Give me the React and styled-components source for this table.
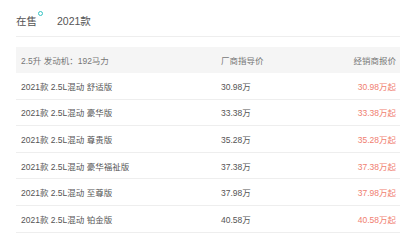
import React from "react";
import styled, { createGlobalStyle } from "styled-components";

const Global = createGlobalStyle`
  html, body { margin: 0; padding: 0; background: #fff; }
  body { font-family: "Liberation Sans", "Noto Sans CJK SC", sans-serif; overflow: hidden; }
`;

const Page = styled.div`
  width: 400px;
  height: 241px;
  padding: 0 0 0 16px;
  box-sizing: border-box;
  overflow: hidden;
`;

const Tabs = styled.div`
  display: flex;
  align-items: center;
  gap: 20px;
  height: 37px;
  padding-top: 4px;
  box-sizing: border-box;
  border-bottom: 1px solid #eeeeee;
  margin-right: -10px;
`;

const Tab = styled.div`
  position: relative;
  font-size: 10.5px;
  color: #555;
`;

const Dot = styled.span`
  position: absolute;
  right: -6px;
  top: -2px;
  width: 3px;
  height: 3px;
  border: 1px solid #35c3c3;
  border-radius: 50%;
`;

const Table = styled.div`
  margin-top: 10px;
  margin-right: -10px;
  font-size: 8.5px;
`;

const Row = styled.div`
  display: grid;
  grid-template-columns: 200px 1fr 120px;
  align-items: center;
  height: ${(p) => (p.$head ? "26px" : "26.6px")};
  padding: 0 14px 0 5px;
  box-sizing: border-box;
  background: ${(p) => (p.$head ? "#f5f5f5" : "#fff")};
  border-bottom: ${(p) => (p.$head ? "none" : "1px solid #eeeeee")};
  color: ${(p) => (p.$head ? "#777" : "#555")};
`;

const Cell = styled.div`
  white-space: nowrap;
  text-align: ${(p) => (p.$right ? "right" : "left")};
  color: ${(p) => (p.$red ? "#f07e70" : "inherit")};
`;

const rows = [
  ["2021款 2.5L混动 舒适版", "30.98万"],
  ["2021款 2.5L混动 豪华版", "33.38万"],
  ["2021款 2.5L混动 尊贵版", "35.28万"],
  ["2021款 2.5L混动 豪华福祉版", "37.38万"],
  ["2021款 2.5L混动 至尊版", "37.98万"],
  ["2021款 2.5L混动 铂金版", "40.58万"],
];

export default function App() {
  return (
    <>
      <Global />
      <Page>
        <Tabs>
          <Tab>
            在售
            <Dot />
          </Tab>
          <Tab>2021款</Tab>
        </Tabs>
        <Table>
          <Row $head>
            <Cell>2.5升 发动机：192马力</Cell>
            <Cell>厂商指导价</Cell>
            <Cell $right>经销商报价</Cell>
          </Row>
          {rows.map(([name, price]) => (
            <Row key={name}>
              <Cell>{name}</Cell>
              <Cell>{price}</Cell>
              <Cell $right $red>
                {price}起
              </Cell>
            </Row>
          ))}
        </Table>
      </Page>
    </>
  );
}
